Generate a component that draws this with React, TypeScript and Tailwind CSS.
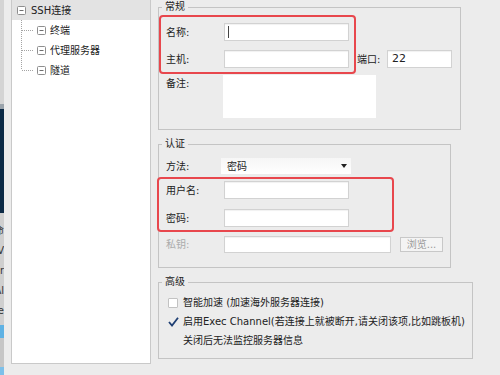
import React from 'react';

const MinusBox = () => (
  <svg width="9" height="9" viewBox="0 0 9 9" className="shrink-0">
    <rect x="0.5" y="0.5" width="8" height="8" rx="1" fill="#fff" stroke="#8e8e8e" />
    <line x1="2.5" y1="4.5" x2="6.5" y2="4.5" stroke="#6e6e6e" />
  </svg>
);

const EdgeStrip = () => (
  <div className="w-[4px] h-full flex flex-col shrink-0 overflow-hidden">
    <div className="h-[104px] bg-[#d4d4d4]" />
    <div className="h-[5px] bg-[#9aa3ab]" />
    <div className="h-[104px] bg-[#0c2a46]" />
    <div className="h-[112px] bg-[#cfcfcf] flex flex-col items-end text-[10px] leading-[20px] text-[#333] pt-[8px]">
      {['命', 'V', 'r', 'Al', 'Ve'].map((t) => (
        <div key={t} className="w-full flex justify-end overflow-hidden whitespace-nowrap">
          <span>{t}</span>
        </div>
      ))}
    </div>
    <div className="h-[13px] bg-[#5fb2e4]" />
    <div className="h-[29px] bg-[#c6c6c6]" />
    <div className="flex-1 bg-[#7dc0ea]" />
  </div>
);

const TreePanel = () => {
  const children = ['终端', '代理服务器', '隧道'];
  return (
    <div className="ml-[7px] w-[140px] h-[364px] bg-white border border-t-0 border-[#c9c9c9] relative shrink-0">
      <svg className="absolute left-0 top-0" width="40" height="80">
        <g stroke="#a4a4a4" strokeDasharray="1 1">
          <line x1="9.5" y1="20" x2="9.5" y2="70" />
          <line x1="10" y1="30.5" x2="21" y2="30.5" />
          <line x1="10" y1="50.5" x2="21" y2="50.5" />
          <line x1="10" y1="70.5" x2="21" y2="70.5" />
        </g>
      </svg>
      <div className="h-[20px] bg-[#e3e3e3] flex items-center gap-[5px] pl-[5px]">
        <MinusBox />
        <span>SSH连接</span>
      </div>
      {children.map((c) => (
        <div key={c} className="h-[20px] flex items-center gap-[4px] pl-[25px] relative">
          <MinusBox />
          <span>{c}</span>
        </div>
      ))}
    </div>
  );
};

const Input = ({ className = '', children }: { className?: string; children?: React.ReactNode }) => (
  <div className={`bg-white border border-[#d2d2d2] shadow-[inset_0_1px_1px_rgba(0,0,0,0.06)] flex items-center ${className}`}>
    {children}
  </div>
);

export default function App() {
  return (
    <div className="w-[500px] h-[375px] bg-[#ececec] flex overflow-hidden relative font-['DejaVu_Sans','Noto_Sans_CJK_SC',sans-serif] text-[10px] text-[#222]">
      <EdgeStrip />
      <TreePanel />

      <div className="ml-[7px] flex flex-col">
        {/* 常规 */}
        <fieldset className="w-[303px] border border-[#c4c4c4] px-[7px] pt-[9px] pb-[11px]">
          <legend className="-ml-[4px] px-[3px] leading-[14px]">常规</legend>
          <div className="flex items-center h-[18px]">
            <span className="w-[58px]">名称:</span>
            <Input className="w-[125px] h-[18px] pl-[3px]">
              <div className="w-px h-[12px] bg-[#444]" />
            </Input>
          </div>
          <div className="flex items-center h-[18px] mt-[9px]">
            <span className="w-[58px]">主机:</span>
            <Input className="w-[125px] h-[18px]" />
            <span className="ml-[8px] w-[30px]">端口:</span>
            <Input className="w-[65px] h-[18px] pl-[4px]">
              <span className="text-[11px]">22</span>
            </Input>
          </div>
          <div className="flex items-start mt-[7px]">
            <span className="w-[57px] pt-[1px]">备注:</span>
            <div className="w-[153px] h-[43px] bg-white" />
          </div>
        </fieldset>

        {/* 认证 */}
        <fieldset className="mt-[7px] w-[293px] border border-[#c4c4c4] px-[7px] pt-[7px] pb-[14px]">
          <legend className="-ml-[4px] px-[3px] leading-[14px]">认证</legend>
          <div className="flex items-center h-[16px]">
            <span className="w-[55px]">方法:</span>
            <div className="w-[130px] h-[16px] bg-gradient-to-b from-[#f6f6f6] to-white flex items-center justify-between pl-[6px] pr-[4px]">
              <span>密码</span>
              <svg width="6" height="4" viewBox="0 0 6 4">
                <path d="M0 0 H6 L3 4 Z" fill="#222" />
              </svg>
            </div>
          </div>
          <div className="flex items-center h-[18px] mt-[7px]">
            <span className="w-[58px]">用户名:</span>
            <Input className="w-[125px] h-[18px]" />
          </div>
          <div className="flex items-center h-[18px] mt-[10px]">
            <span className="w-[58px]">密码:</span>
            <Input className="w-[125px] h-[18px]" />
          </div>
          <div className="flex items-center h-[17px] mt-[9px]">
            <span className="w-[58px] text-[#ababab]">私钥:</span>
            <Input className="w-[167px] h-[17px]" />
            <div className="ml-[9px] w-[43px] h-[15px] border border-[#c8c8c8] bg-[#f4f4f4] text-[#9a9a9a] flex items-center justify-center">
              浏览...
            </div>
          </div>
        </fieldset>

        {/* 高级 */}
        <fieldset className="mt-[7px] w-[315px] border border-[#c4c4c4] px-[7px] pt-[4px] pb-[8px]">
          <legend className="-ml-[4px] px-[3px] leading-[14px]">高级</legend>
          <div className="flex items-center h-[19px] pl-[2px]">
            <div className="w-[10px] h-[10px] bg-white border border-[#c2c2c2] rounded-[1px]" />
            <span className="ml-[5px]">智能加速 (加速海外服务器连接)</span>
          </div>
          <div className="flex items-center h-[19px] pl-[2px]">
            <svg width="11" height="10" viewBox="0 0 11 10" className="shrink-0">
              <path d="M1 5 L4 8.5 L10 0.8" fill="none" stroke="#1f3f73" strokeWidth="1.8" />
            </svg>
            <span className="ml-[4px] whitespace-nowrap">启用Exec Channel(若连接上就被断开,请关闭该项,比如跳板机)</span>
          </div>
          <div className="flex items-center h-[19px] pl-[17px]">
            <span>关闭后无法监控服务器信息</span>
          </div>
        </fieldset>
      </div>

      {/* annotation boxes */}
      <div className="absolute left-[159px] top-[15px] w-[197px] h-[59px] border-2 border-[#e8474d] rounded-[4px]" />
      <div className="absolute left-[157px] top-[177px] w-[237px] h-[55px] border-2 border-[#e8474d] rounded-[4px]" />
    </div>
  );
}
